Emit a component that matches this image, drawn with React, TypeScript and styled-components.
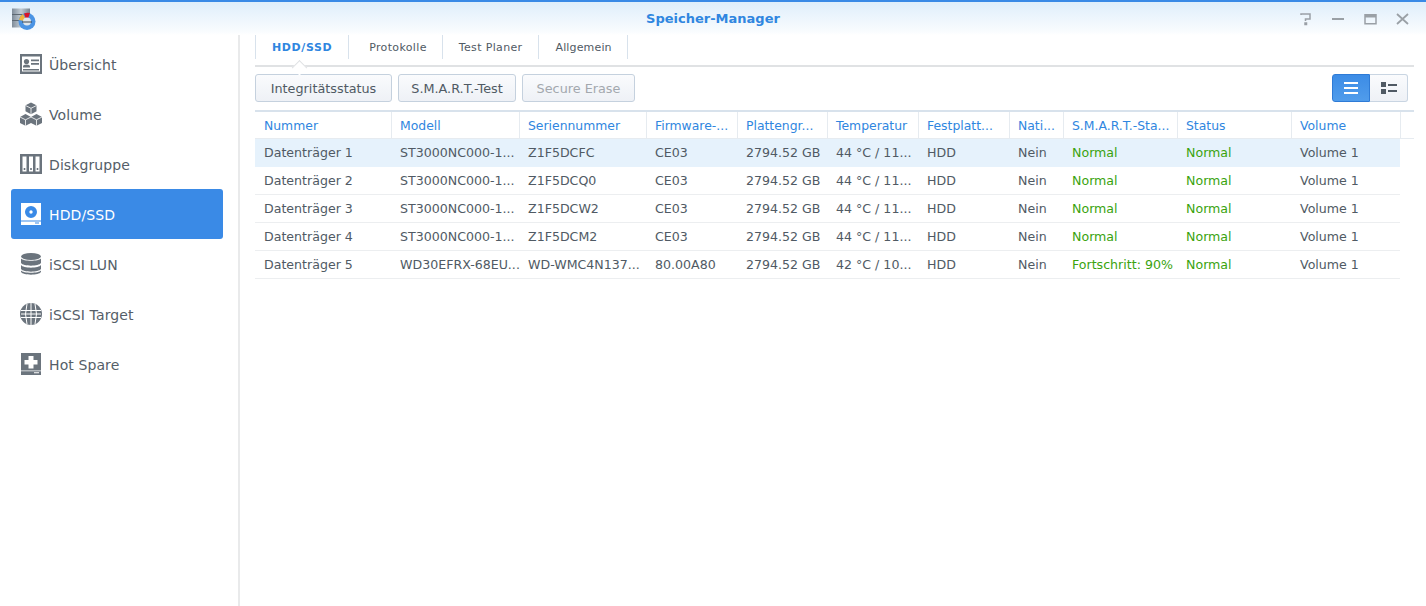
import React from "react";
import styled, { createGlobalStyle } from "styled-components";

const Global = createGlobalStyle`
  html, body { margin: 0; padding: 0; height: 100%; background: #fff; }
  #root { height: 100%; }
  * { box-sizing: border-box; }
`;

const Win = styled.div`
  width: 1426px; height: 606px; overflow: hidden; display: flex; flex-direction: column;
  font-family: "DejaVu Sans", sans-serif; font-size: 13px; color: #505a64; background: #fff;
`;
const TitleBar = styled.header`
  height: 35px; flex: none; border-top: 2px solid #3a8ae6; display: grid; grid-template-columns: 1fr auto 1fr; align-items: center;
  padding: 0 12px; background: linear-gradient(#dfeefb, #f9fcfe 90%, #fff);
`;
const Title = styled.div`
  text-align: center; color: #2f86e0; font-weight: bold; font-size: 13px;
`;
const WinButtons = styled.div`
  display: flex; align-items: center; justify-content: flex-end; gap: 16px; padding-right: 4px;
`;
const Side = styled.nav`
  width: 240px; flex: none; padding: 4px 15px 0 11px; border-right: 2px solid #e9eaeb;
  display: flex; flex-direction: column;
`;
const Body = styled.div`flex: 1; display: flex; min-height: 0;`;
const NavItem = styled.div<{ $active?: boolean }>`
  height: 50px; display: flex; align-items: center; gap: 6px; padding-left: 8px; border-radius: 3px; font-size: 14px;
  background: ${p => (p.$active ? "#3a8ae6" : "transparent")};
  color: ${p => (p.$active ? "#fff" : "#555e68")};
  svg { width: 24px; height: 24px; flex: none; }
  span { padding-top: 1px; letter-spacing: 0.1px; }
`;
const Main = styled.main`flex: 1; min-width: 0; padding: 0 12px 0 15px; display: flex; flex-direction: column;`;
const Tabs = styled.div`
  height: 32px; flex: none; display: flex; border-bottom: 2px solid #e0e2e4;
`;
const Tab = styled.div<{ $active?: boolean }>`
  height: 24px; padding: 0 16px; display: flex; align-items: center;
  font-size: 11px; letter-spacing: 0.35px; border-right: 1px solid #d8e2ec; position: relative;
  ${p => p.$active ? "border-left: 1px solid #d8e2ec; font-weight: bold; color: #2f86e0; letter-spacing: 0.6px;" : "color: #505a64;"}
  &:nth-child(2) { padding: 0 15px 0 20px; }
  &:nth-child(4) { letter-spacing: 0.15px; padding-right: 15px; }
  ${p => p.$active ? `&::after { content: ""; position: absolute; left: 38px; bottom: -10px; width: 10px; height: 10px; background: #fff;
    border-left: 1px solid #e0e2e4; border-top: 1px solid #e0e2e4; transform: rotate(45deg) translate(3px, 3px); }` : ""}
`;
const Toolbar = styled.div`
  flex: none; display: flex; gap: 6px; align-items: center; margin-top: 7px; height: 28px;
`;
const Button = styled.button<{ $disabled?: boolean; $w: number }>`
  height: 28px; width: ${p => p.$w}px; padding: 0; border: 1px solid #c5d1de; border-radius: 3px;
  background: linear-gradient(#fafbfd, #eef1f6); font: inherit; font-size: 12.8px;
  color: ${p => (p.$disabled ? "#a3a8ae" : "#505a64")};
`;
const Spacer = styled.div`flex: 1;`;
const Toggle = styled.div`display: flex; margin-right: 6px; height: 28px;`;
const ToggleBtn = styled.div<{ $on?: boolean }>`
  width: 38px; display: flex; align-items: center; justify-content: center;
  border: 1px solid ${p => (p.$on ? "#2e7bd6" : "#c9d5e2")};
  border-radius: ${p => (p.$on ? "3px 0 0 3px" : "0 3px 3px 0")};
  ${p => (p.$on ? "" : "border-left: none;")}
  background: ${p => (p.$on ? "linear-gradient(#3c8ce6, #509ceb)" : "linear-gradient(#fafbfd, #eef1f6)")};
`;
const COLS = "137px 128px 127px 91px 90px 91px 91px 54px 114px 114px 109px 13px";
const Table = styled.div`margin-top: 8px; border-top: 2px solid #d8e2ec;`;
const HeadRow = styled.div`
  display: grid; grid-template-columns: ${COLS}; height: 27px; border-bottom: 1px solid #e6ebf0;
`;
const HeadCell = styled.div`
  color: #2f86e0; padding: 0 0 0 8px; line-height: 28px; white-space: nowrap; overflow: hidden; font-size: 12.4px;
  border-right: 1px solid #e6ebf0;
  &:first-child { padding-left: 9px; }
  &:last-child { border-right: none; }
`;
const Row = styled.div<{ $sel?: boolean }>`
  display: grid; grid-template-columns: ${COLS}; height: 28px; width: 1145px;
  border-bottom: 1px solid ${p => (p.$sel ? "#e6f2fc" : "#eceef0")};
  background: ${p => (p.$sel ? "#e6f2fc" : "#fff")};
`;
const Cell = styled.div<{ $ok?: boolean }>`
  padding: 0 0 0 8px; line-height: 27px; white-space: nowrap; overflow: hidden; font-size: 12.6px;
  color: ${p => (p.$ok ? "#3aa30e" : "#505a64")};
  &:first-child { padding-left: 9px; }
`;

const G = "#6b747d";
const icons: Record<string, React.ReactNode> = {
  overview: (
    <svg viewBox="0 0 24 24"><path fill={G} fillRule="evenodd" d="M1 2h22v20H1zM3 4.500v15h18v-15z" /><circle cx="7.500" cy="9.500" r="2.600" fill={G} /><path fill={G} d="M4 15.500v-1q0-2 3.500-2t3.500 2v1zM12 7.500h8v1.800h-8zM12 11h8v1.800h-8zM4 17h16v1.600H4z" /></svg>
  ),
  volume: (
    <svg viewBox="0 0 24 24"><path fill={G} d="M12 .5l5.500 2.800v6L12 12.200 6.500 9.300v-6zM6.500 12l5.500 2.900v6L6.500 23.800 1 20.900v-6zM17.500 12l5.500 2.900v6l-5.500 2.900-5.500-2.900v-6z" /><path stroke="#fff" strokeWidth=".8" fill="none" d="M6.500 3.500L12 6.300l5.500-2.800M12 6.300v6M1 15l5.500 2.800L12 15M6.500 17.800v6M12 15l5.500 2.800L23 15M17.500 17.800v6" /></svg>
  ),
  group: (
    <svg viewBox="0 0 24 24"><path fill={G} fillRule="evenodd" d="M1 2h22v20H1zM3.500 4.500v15h4v-15zM10 4.500v15h4v-15zM16.500 4.500v15h4v-15z" /><path fill={G} d="M4.700 16h1.600v2H4.700zM11.200 16h1.600v2h-1.600zM17.700 16h1.600v2h-1.600z" /></svg>
  ),
  hdd: (
    <svg viewBox="0 0 24 24"><path fill="#fff" fillRule="evenodd" d="M2 1h20v22H2zM12 4a6 6 0 100 12 6 6 0 000-12zM12 8.300a1.700 1.700 0 110 3.400 1.700 1.700 0 010-3.400zM2 18.500v1h20v-1zM16 20.500v1h4v-1z" /></svg>
  ),
  lun: (
    <svg viewBox="0 0 24 24"><ellipse cx="12" cy="4.500" rx="10" ry="3.500" fill={G} /><path fill={G} d="M2 6.500C4 9.500 20 9.500 22 6.500V11C20 14.500 4 14.500 2 11zM2 13C4 16.500 20 16.500 22 13V17C20 20.500 4 20.500 2 17zM2 18.500C4 21.500 20 21.500 22 18.500V20C20 23.500 4 23.500 2 20z" /></svg>
  ),
  target: (
    <svg viewBox="0 0 24 24"><circle cx="12" cy="12" r="11" fill={G} /><path fill="none" stroke="#fff" strokeWidth="1" d="M2 8.500h20M2 12h20M2 15.500h20M12 1v22M8 2Q5 12 8 22M16 2q3 10 0 20" /></svg>
  ),
  spare: (
    <svg viewBox="0 0 24 24"><path fill={G} fillRule="evenodd" d="M2 1h20v22H2zM9.500 4v4h-4v4.500h4v4h5v-4h4V8h-4V4zM2 18.500v.8h20v-.8zM15 20.300v1h5v-1z" /></svg>
  ),
};

const nav = [
  ["overview", "Übersicht"], ["volume", "Volume"], ["group", "Diskgruppe"], ["hdd", "HDD/SSD"],
  ["lun", "iSCSI LUN"], ["target", "iSCSI Target"], ["spare", "Hot Spare"],
];
const heads = ["Nummer", "Modell", "Seriennummer", "Firmware-...", "Plattengr...", "Temperatur", "Festplatt...", "Nati...", "S.M.A.R.T.-Sta...", "Status", "Volume", ""];
const rows = [
  ["Datenträger 1", "ST3000NC000-1...", "Z1F5DCFC", "CE03", "44 °C / 11...", "Normal"],
  ["Datenträger 2", "ST3000NC000-1...", "Z1F5DCQ0", "CE03", "44 °C / 11...", "Normal"],
  ["Datenträger 3", "ST3000NC000-1...", "Z1F5DCW2", "CE03", "44 °C / 11...", "Normal"],
  ["Datenträger 4", "ST3000NC000-1...", "Z1F5DCM2", "CE03", "44 °C / 11...", "Normal"],
  ["Datenträger 5", "WD30EFRX-68EU...", "WD-WMC4N137...", "80.00A80", "42 °C / 10...", "Fortschritt: 90%"],
];

const AppLogo = () => (
  <svg width="24" height="24" viewBox="0 0 24 24">
    <defs>
      <linearGradient id="drum" x1="0" x2="1" y1="0" y2="0">
        <stop offset="0" stopColor="#7f8c99" /><stop offset=".5" stopColor="#c3ccd4" /><stop offset="1" stopColor="#76838f" />
      </linearGradient>
    </defs>
    <path fill="url(#drum)" d="M0 1.500h18v19H0z" />
    <path stroke="#5e6973" strokeWidth="1" d="M0 7.500h18M0 13.500h18" />
    <circle cx="15" cy="14.500" r="8.500" fill="#4b94e4" />
    <path fill="#f0b43c" d="M15 14.500L7 13a8.500 8.500 0 014-6z" />
    <path fill="#d8152a" d="M15 14.500L12 6.500a8.500 8.500 0 016-.5z" />
    <circle cx="15" cy="14.500" r="4" fill="#dfe6ec" />
    <path stroke="#3d4750" d="M10 15h10" />
  </svg>
);

export default function App() {
  return (
    <Win>
      <Global />
      <TitleBar>
        <AppLogo />
        <Title>Speicher-Manager</Title>
        <WinButtons>
          <svg width="16" height="16" viewBox="0 0 16 16" fill="none" stroke="#9aa0a6" strokeWidth="1.500"><path d="M3 4V3h9v5H7.500v2M7 12h1.500v1.500H7z" /></svg>
          <svg width="16" height="16" viewBox="0 0 16 16" fill="none" stroke="#9aa0a6" strokeWidth="2"><path d="M2 8h12" /></svg>
          <svg width="16" height="16" viewBox="0 0 16 16" fill="none" stroke="#9aa0a6"><path strokeWidth="1.500" d="M3 3.800h11v9H3z" /><path strokeWidth="3" d="M3 5h11" /></svg>
          <svg width="16" height="16" viewBox="0 0 16 16" fill="none" stroke="#9aa0a6" strokeWidth="1.800"><path d="M3 3l11 10M14 3L3 13" /></svg>
        </WinButtons>
      </TitleBar>
      <Body>
        <Side>
          {nav.map(([k, label]) => (
            <NavItem key={k} $active={k === "hdd"}>{icons[k]}<span>{label}</span></NavItem>
          ))}
        </Side>
        <Main>
          <Tabs>
            <Tab $active>HDD/SSD</Tab>
            <Tab>Protokolle</Tab>
            <Tab>Test Planer</Tab>
            <Tab>Allgemein</Tab>
          </Tabs>
          <Toolbar>
            <Button $w={137}>Integritätsstatus</Button>
            <Button $w={118}>S.M.A.R.T.-Test</Button>
            <Button $w={113} $disabled>Secure Erase</Button>
            <Spacer />
            <Toggle>
              <ToggleBtn $on>
                <svg width="14" height="12" viewBox="0 0 14 12" fill="#fff"><path d="M0 0h14v2H0zM0 5h14v2H0zM0 10h14v2H0z" /></svg>
              </ToggleBtn>
              <ToggleBtn>
                <svg width="16" height="12" viewBox="0 0 16 12" fill="#505a64"><path d="M0 0h5v5H0zM0 7h5v5H0zM7 2h9v2H7zM7 8h9v2H7z" /></svg>
              </ToggleBtn>
            </Toggle>
          </Toolbar>
          <Table>
            <HeadRow>{heads.map((h, i) => <HeadCell key={i}>{h}</HeadCell>)}</HeadRow>
            {rows.map((r, i) => (
              <Row key={i} $sel={i === 0}>
                <Cell>{r[0]}</Cell>
                <Cell>{r[1]}</Cell>
                <Cell>{r[2]}</Cell>
                <Cell>{r[3]}</Cell>
                <Cell>2794.52 GB</Cell>
                <Cell>{r[4]}</Cell>
                <Cell>HDD</Cell>
                <Cell>Nein</Cell>
                <Cell $ok>{r[5]}</Cell>
                <Cell $ok>Normal</Cell>
                <Cell>Volume 1</Cell>
              </Row>
            ))}
          </Table>
        </Main>
      </Body>
    </Win>
  );
}
